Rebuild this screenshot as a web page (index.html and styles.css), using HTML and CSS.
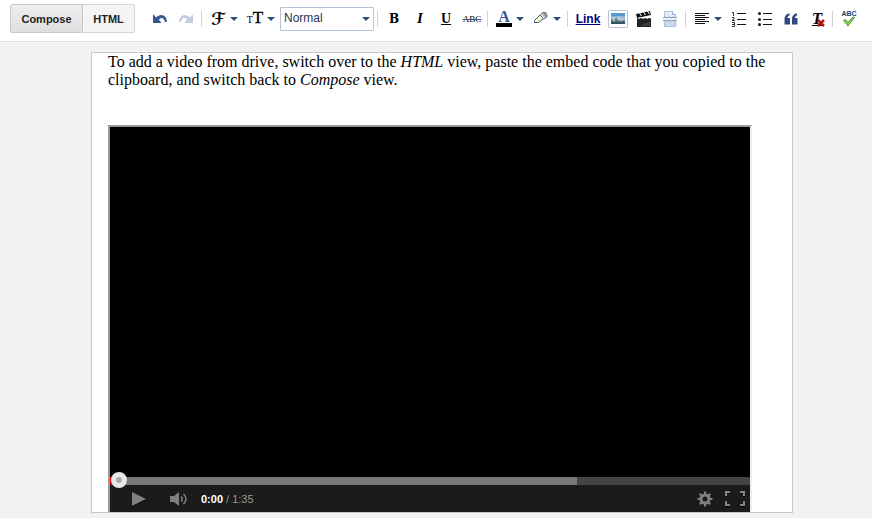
FILE: index.html
```html
<!DOCTYPE html>
<html lang="en">
<head>
<meta charset="utf-8">
<title>Post editor</title>
<link rel="stylesheet" href="styles.css">
</head>
<body>
<header class="toolbar">
  <div class="modes">
    <button class="mode mode-active" type="button">Compose</button>
    <button class="mode" type="button">HTML</button>
  </div>
  <button class="tool" type="button" aria-label="Undo">
    <svg width="16" height="10" viewBox="0 0 16 10"><path d="M1 1v8h8V8L7 6Q7.500 4 9.500 4 12 4 13 8h2Q14.500 1 9 1 6 1 4 3.500L2 1z" fill="#365692"/></svg>
  </button>
  <button class="tool" type="button" aria-label="Redo">
    <svg width="16" height="10" viewBox="0 0 16 10"><path d="M15 1v8H7V8l2-2Q8.500 4 6.500 4 4 4 3 8H1Q1.500 1 7 1q3 0 5 2.500L14 1z" fill="#c5cede"/></svg>
  </button>
  <span class="sep"></span>
  <button class="tool tool-menu" type="button" aria-label="Font"><span class="glyph script">ℱ</span><span class="caret"></span></button>
  <button class="tool tool-menu" type="button" aria-label="Font size"><span class="glyph size"><small>T</small>T</span><span class="caret"></span></button>
  <div class="format">
    <select aria-label="Paragraph format"><option>Normal</option></select>
    <span class="caret"></span>
  </div>
  <span class="sep"></span>
  <button class="tool bold" type="button" aria-label="Bold">B</button>
  <button class="tool italic" type="button" aria-label="Italic">I</button>
  <button class="tool underline" type="button" aria-label="Underline">U</button>
  <button class="tool strike" type="button" aria-label="Strikethrough">ABC</button>
  <span class="sep"></span>
  <button class="tool tool-menu" type="button" aria-label="Text color"><span class="glyph color">A</span><span class="caret"></span></button>
  <button class="tool tool-menu" type="button" aria-label="Highlight color">
    <svg width="16" height="16" viewBox="0 0 16 16"><path d="M1.500 11.500v-2L7 4l3.500 3.500-5 4z" fill="#ffffc4" stroke="#365692"/><path d="M7 4 9.500 1.500H12L14 4v2l-3.500 2z" fill="#b9bec8" stroke="#6c7686"/><path d="m10 2 3.500 4.500V1.500L12.500 1z" fill="#858585"/><path d="m8 3.500 3 3.500" stroke="#fff"/></svg>
    <span class="caret"></span>
  </button>
  <span class="sep"></span>
  <button class="tool link" type="button">Link</button>
  <button class="tool" type="button" aria-label="Insert image">
    <svg width="20" height="18" viewBox="0 0 20 18"><rect x=".5" y=".5" width="19" height="17" rx="1" fill="#fff" stroke="#b6c3d8"/><path d="M3 3h14v11H3z" fill="#82b9e5"/><path d="M3 3h14v3H3z" fill="#5798d1"/><path d="m3 8 3-1 2 1 3-2 3 2 3 1v5H3z" fill="#b8c9cf"/><path d="m3 9 3 1 3-2 3 3 5-1v4H3z" fill="#5a7477"/><path d="M3 12h14v2H3z" fill="#31525f"/><path d="m5 10 2 1m2-2 2 1" stroke="#dce5e5"/></svg>
  </button>
  <button class="tool" type="button" aria-label="Insert video">
    <svg width="16" height="16" viewBox="0 0 16 16"><path d="M1 7h14v9H1z" fill="#222"/><path d="M1 7h14v1H1z" fill="#555"/><path d="m0 3 14-3 1 4L1 7z" fill="#151515"/><path d="m3.500 2 2 3m2-4 2 3m2-4 2 3M4 6 3 8m5-2L7 8m5-2-1 2" stroke="#fff"/><path d="m4 15 10-5v5z" fill="#3b3b3b"/></svg>
  </button>
  <button class="tool" type="button" aria-label="Insert jump break">
    <svg width="14" height="16" viewBox="0 0 14 16"><path d="M1.500 7V.5h8l3 3V7l-2-1-2 1-2-1-2 1-2-1z" fill="#e5eef8" stroke="#b5c7dd"/><path d="M9.500.5v3h3" fill="#fff" stroke="#8da9c9"/><path d="m0 7 2-1 2 1 2-1 2 1 2-1 2 1 2-1" fill="none" stroke="#8496ac"/><path d="m1.500 10 2-1 2 1 2-1 2 1 3-1v6.500h-11z" fill="#c8dbee"/><path d="M1.500 10v5.500h11V10" fill="none" stroke="#aac0da"/><path d="m0 10 2-1 2 1 2-1 2 1 2-1 2 1 2-1" fill="none" stroke="#7890ac"/></svg>
  </button>
  <span class="sep"></span>
  <button class="tool tool-menu" type="button" aria-label="Alignment">
    <svg width="16" height="14" viewBox="0 0 16 14"><path d="M1 1.500h14M1 3.500h10M1 5.500h14M1 7.500h10M1 9.500h14M1 11.500h10" stroke="#111"/></svg>
    <span class="caret"></span>
  </button>
  <button class="tool" type="button" aria-label="Numbered list">
    <svg width="16" height="16" viewBox="0 0 16 16"><path d="M6 2.500h9M6 8.500h9M6 13.500h9" stroke="#111"/><path d="M1 1.500h1.500V5M1 6.500h2V8L1 9.500h3M1 11.500h2.500v4H1m0-2h2" fill="none" stroke="#333"/></svg>
  </button>
  <button class="tool" type="button" aria-label="Bulleted list">
    <svg width="16" height="16" viewBox="0 0 16 16"><path d="M6 2.500h9M6 8.500h9M6 13.500h9" stroke="#111"/><g fill="#111"><circle cx="2.500" cy="2.500" r="1.500"/><circle cx="2.500" cy="8.500" r="1.500"/><circle cx="2.500" cy="13.500" r="1.500"/></g></svg>
  </button>
  <button class="tool" type="button" aria-label="Quote">
    <svg width="14" height="12" viewBox="0 0 14 12"><path d="M5.500.5v2C4 3 3.500 4 3.500 5H6v6.500H.5V6C.5 3 2.500.5 5.500.5m7.500 0v2C11.500 3 11 4 11 5h2.500v6.500H8V6C8 3 10 .5 13 .5" fill="#2f4a7d"/></svg>
  </button>
  <button class="tool clear" type="button" aria-label="Remove formatting">T
    <svg class="badge" width="8" height="8" viewBox="0 0 8 8"><path d="m1 1 6 6m0-6L1 7" stroke="#b81414" stroke-width="2.500"/></svg>
  </button>
  <span class="sep"></span>
  <button class="tool spell" type="button" aria-label="Check spelling">ABC
    <svg width="14" height="11" viewBox="0 0 14 11"><path d="m1.500 4.500 2-1 2.500 3L11 .8l1.500.7L6 10z" fill="#8ed34b" stroke="#4f9f37"/></svg>
  </button>
</header>
<main class="page">
  <p class="copy">To add a video from drive, switch over to the <em>HTML</em> view, paste the embed code that you copied to the clipboard, and switch back to <em>Compose</em> view.</p>
  <section class="player" aria-label="Video">
    <div class="stage"></div>
    <div class="progress"><div class="loaded"></div><span class="knob"></span></div>
    <div class="controls">
      <button class="control play" type="button" aria-label="Play">
        <svg width="16" height="16" viewBox="0 0 16 16"><path d="M1 2v14l14-7z" fill="#050505"/><path d="M1 1v14l14-7z" fill="#808080"/></svg>
      </button>
      <button class="control volume" type="button" aria-label="Mute">
        <svg width="20" height="16" viewBox="0 0 20 16"><path d="M1 5h4l5-4v14l-5-4H1z" fill="#808080"/><path d="M12 5.500q2.500 2.500 0 5M14.500 3q5 5 0 10" fill="none" stroke="#808080" stroke-width="1.500"/></svg>
      </button>
      <span class="time"><b>0:00</b> / 1:35</span>
      <button class="control settings" type="button" aria-label="Settings">
        <svg width="16" height="16" viewBox="0 0 16 16"><circle cx="8" cy="8" r="4" fill="none" stroke="#808080" stroke-width="3"/><path d="M8 .5V4m0 8v3.500M.5 8H4m8 0h3.500M2.700 2.700l2.500 2.500m5.600 5.600 2.500 2.500m0-10.600-2.500 2.500m-5.600 5.600-2.500 2.500" stroke="#808080" stroke-width="2"/></svg>
      </button>
      <button class="control" type="button" aria-label="Full screen">
        <svg width="20" height="17" viewBox="0 0 20 17"><path d="M1 7V3h4m10 0h4v4M1 12v4h4m10 0h4v-4" fill="none" stroke="#050505" stroke-width="2"/><path d="M1 6V2h4m10 0h4v4M1 11v4h4m10 0h4v-4" fill="none" stroke="#858585" stroke-width="2"/></svg>
      </button>
    </div>
  </section>
</main>
</body>
</html>
```
FILE: styles.css
```css
* { box-sizing: border-box; }

body {
  display: flex;
  flex-direction: column;
  min-height: 100vh;
  margin: 0;
  background: #f2f2f2;
  color: #000;
  font-family: "Liberation Sans", Arial, sans-serif;
}

button {
  margin: 0;
  padding: 0;
  border: 0;
  background: none;
  color: inherit;
  font-family: inherit;
}

svg { display: block; flex: none; }

.toolbar {
  display: flex;
  align-items: center;
  padding: 4px 10px 8px;
  border-bottom: 1px solid #dfdfdf;
  background: #fff;
}

.modes {
  display: flex;
  flex: none;
  margin-right: 12px;
}

.mode {
  width: 52px;
  height: 29px;
  border: 1px solid #d5d5d5;
  border-left: 0;
  border-radius: 0 2px 2px 0;
  background: #f4f4f4;
  color: #222;
  font-size: 11px;
  font-weight: bold;
}

.mode-active {
  width: 73px;
  border: 1px solid #c8c8c8;
  border-radius: 2px 0 0 2px;
  background: linear-gradient(#eee, #dfdfdf);
}

.tool {
  position: relative;
  display: flex;
  flex: none;
  align-items: center;
  justify-content: center;
  width: 26px;
  height: 24px;
  font-family: "Liberation Serif", serif;
}

.tool-menu {
  justify-content: flex-start;
  gap: 4px;
  width: 37px;
  padding: 0 5px;
}

.sep {
  flex: none;
  width: 1px;
  height: 16px;
  margin: 0 3px 0 2px;
  background: #d2d2d2;
}

.caret {
  flex: none;
  border: 4px solid transparent;
  border-top-color: #2f4a7d;
  border-bottom: 0;
}

.glyph {
  display: flex;
  flex: none;
  align-items: baseline;
  justify-content: center;
  width: 16px;
  line-height: 16px;
}

.script {
  font-family: "DejaVu Serif", "DejaVu Sans", serif;
  font-size: 17px;
  font-weight: bold;
}

.size {
  font-size: 17px;
  -webkit-text-stroke: 1px #000;
  -webkit-text-stroke: thin #000;
}

.size small {
  font-size: 10px;
  -webkit-text-stroke: 0;
}

.format {
  display: grid;
  flex: none;
  align-items: center;
  width: 94px;
  margin: 0 1px;
}

.format > * { grid-area: 1 / 1; }

.format select {
  width: 100%;
  height: 24px;
  padding: 0 4px 2px 3px;
  border: 1px solid #b4c4da;
  border-radius: 1px;
  background: #fff;
  color: #27364f;
  font-family: inherit;
  font-size: 12px;
  appearance: none;
}

.format .caret {
  justify-self: end;
  margin-right: 4px;
  pointer-events: none;
}

.bold {
  font-family: "DejaVu Serif", serif;
  font-size: 12px;
  font-weight: bold;
}

.italic { font-size: 15px; font-weight: bold; font-style: italic; }
.underline { font-size: 14px; font-weight: bold; text-decoration: underline; }
.strike { font-size: 9px; text-decoration: line-through #365692; }

.color {
  border-bottom: 4px solid #000;
  color: #365692;
  font-size: 16px;
  font-weight: bold;
  line-height: 13px;
}

.link {
  width: 34px;
  color: #00007f;
  font-family: inherit;
  font-size: 12px;
  font-weight: bold;
  text-decoration: underline;
}

.clear {
  font-size: 17px;
  font-style: italic;
  font-weight: bold;
  text-decoration: underline;
}

.badge { position: absolute; right: 5px; bottom: 4px; }

.spell {
  flex-direction: column;
  color: #253e6e;
  font-family: inherit;
  font-size: 7px;
  font-weight: bold;
  line-height: 5px;
}

.page {
  display: flex;
  flex: 1;
  flex-direction: column;
  margin: 10px 79px 5px 91px;
  padding: 0 16px;
  border: 1px solid #c8c8c8;
  background: #fff;
}

.copy {
  margin: 0 0 36px;
  font-family: "Liberation Serif", "Times New Roman", serif;
  font-size: 16px;
  line-height: 18px;
}

.player {
  display: flex;
  flex: 1;
  flex-direction: column;
  max-width: 644px;
  border: 2px solid #999;
  border-right-color: #eee;
  border-bottom: 0;
  background: #000;
}

.stage { flex: 1; min-height: 200px; }

.progress {
  position: relative;
  height: 8px;
  background: #444;
}

.loaded {
  width: 73%;
  height: 8px;
  border-left: 2px solid #d00;
  background: #777;
}

.knob {
  position: absolute;
  top: -5px;
  left: 1px;
  width: 16px;
  height: 16px;
  border: 5px solid #e8e8e8;
  border-radius: 50%;
  background: #aaa;
}

.controls {
  display: flex;
  align-items: center;
  height: 27px;
  padding: 0 5px 0 21px;
  background: #1b1b1b;
}

.play { margin-right: 22px; }
.volume { margin-right: 12px; }
.settings { margin: 0 12px 0 auto; }

.time { color: #999; font-size: 11px; }
.time b { color: #fff; }
```
